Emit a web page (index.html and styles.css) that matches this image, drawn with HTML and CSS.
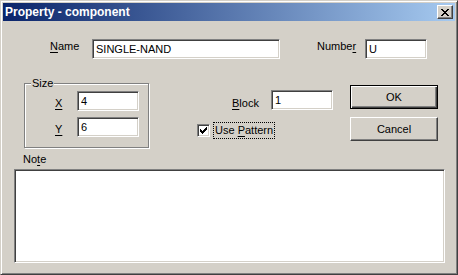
FILE: index.html
```html
<!DOCTYPE html>
<html lang="en">
<head>
    <meta charset="UTF-8">
    <title>Property - component</title>
    <link rel="stylesheet" href="styles.css">
</head>
<body>
    <div class="window">
        <div class="titlebar">
            <span class="title">Property - component</span>
            <button class="close-btn" type="button">
                <svg width="8" height="7" viewBox="0 0 8 7" shape-rendering="crispEdges">
                    <path d="M0 0h2v1h-2z M6 0h2v1h-2z M1 1h2v1h-2z M5 1h2v1h-2z M2 2h4v1h-4z M3 3h2v1h-2z M2 4h4v1h-4z M1 5h2v1h-2z M5 5h2v1h-2z M0 6h2v1h-2z M6 6h2v1h-2z" fill="#000"/>
                </svg>
            </button>
        </div>

        <div class="content">
            <div class="row-top">
                <label class="lbl lbl-name"><u>N</u>ame</label>
                <input class="field field-name" type="text" value="SINGLE-NAND">
                <label class="lbl lbl-number">Numbe<u>r</u></label>
                <input class="field field-short" type="text" value="U">
            </div>

            <div class="row-mid">
                <fieldset class="group">
                    <legend>Size</legend>
                    <div class="group-row">
                        <label class="lbl lbl-axis"><u>X</u></label>
                        <input class="field field-short" type="text" value="4">
                    </div>
                    <div class="group-row group-row-next">
                        <label class="lbl lbl-axis"><u>Y</u></label>
                        <input class="field field-short" type="text" value="6">
                    </div>
                </fieldset>

                <div class="middle">
                    <div class="block-row">
                        <label class="lbl lbl-block"><u>B</u>lock</label>
                        <input class="field field-short" type="text" value="1">
                    </div>
                    <div class="check-row">
                        <span class="checkbox">
                            <svg width="7" height="7" viewBox="0 0 7 7" shape-rendering="crispEdges">
                                <path d="M6 0h1v1h-1z M5 1h2v1h-2z M0 2h1v1h-1z M4 2h3v1h-3z M0 3h2v1h-2z M3 3h3v1h-3z M0 4h5v1h-5z M1 5h3v1h-3z M2 6h1v1h-1z" fill="#000"/>
                            </svg>
                        </span>
                        <span class="check-label">Use <u>P</u>attern</span>
                    </div>
                </div>

                <div class="buttons">
                    <button class="btn btn-default" type="button">OK</button>
                    <button class="btn" type="button">Cancel</button>
                </div>
            </div>

            <label class="lbl lbl-note">No<u>t</u>e</label>
            <textarea class="field note"></textarea>
        </div>
    </div>
</body>
</html>
```

FILE: styles.css
```css
body {
    margin: 0;
    font-family: "Liberation Sans", Arial, sans-serif;
    font-size: 11px;
    color: #000;
}

.window {
    width: 458px;
    height: 275px;
    box-sizing: border-box;
    background-color: #d4d0c8;
    border: 1px solid;
    border-color: #d4d0c8 #404040 #404040 #d4d0c8;
    box-shadow: inset 1px 1px #fff, inset -1px -1px #808080;
    padding: 2px;
}

.titlebar {
    height: 18px;
    display: flex;
    align-items: center;
    justify-content: space-between;
    padding: 0 2px;
    background: linear-gradient(to right, #0a246a, #a6caf0);
    color: #fff;
    font-size: 12px;
    font-weight: bold;
}

.close-btn {
    width: 16px;
    height: 14px;
    padding: 0;
    margin: 0;
    display: flex;
    align-items: center;
    justify-content: center;
    background-color: #d4d0c8;
    border: 1px solid;
    border-color: #fff #404040 #404040 #fff;
    box-shadow: inset -1px -1px #808080;
}

/* sunken edit box */
.field {
    box-sizing: border-box;
    height: 20px;
    margin: 0;
    padding: 0 3px;
    border: 1px solid;
    border-color: #808080 #fff #fff #808080;
    box-shadow: inset 1px 1px #404040, inset -1px -1px #d4d0c8;
    background-color: #fff;
    font: inherit;
    color: #000;
    outline: none;
}

.field-name { width: 188px; }
.field-short { width: 62px; }

.lbl {
    box-sizing: border-box;
    line-height: 13px;
    align-self: flex-start;
}

u { text-decoration: underline; text-underline-offset: 2px; }

.row-top {
    display: flex;
    margin-top: 18px;
}

.lbl-name { width: 89px; padding: 1px 0 0 47px; }
.lbl-number { width: 85px; padding: 1px 0 0 37px; }

.row-mid {
    display: flex;
    align-items: flex-start;
}

.group {
    box-sizing: border-box;
    width: 125px;
    margin: 18px 0 0 21px;
    padding: 1px 0 10px 0;
    border: 1px solid #808080;
    box-shadow: 1px 1px 0 #fff, inset 1px 1px 0 #fff;
}

.group legend {
    margin-left: 6px;
    padding: 0 1px;
    line-height: 13px;
    background-color: #d4d0c8;
}

.group-row { display: flex; }
.group-row-next { margin-top: 6px; }

.lbl-axis { width: 52px; padding: 6px 0 0 30px; }

.middle {
    display: flex;
    flex-direction: column;
    width: 184px;
}

.block-row {
    display: flex;
    margin-top: 31px;
}

.lbl-block { width: 122px; padding: 7px 0 0 83px; }

.check-row {
    display: flex;
    align-items: flex-start;
    margin-top: 12px;
    padding-left: 48px;
}

.checkbox {
    box-sizing: border-box;
    width: 13px;
    height: 13px;
    margin: 2px 3px 0 0;
    display: flex;
    align-items: center;
    justify-content: center;
    border: 1px solid;
    border-color: #808080 #fff #fff #808080;
    box-shadow: inset 1px 1px #404040, inset -1px -1px #d4d0c8;
    background-color: #fff;
}

.check-label {
    line-height: 13px;
    padding: 1px 1px;
    border: 1px dotted #000;
}

.buttons {
    display: flex;
    flex-direction: column;
    gap: 8px;
    margin: 26px 0 0 17px;
}

.btn {
    box-sizing: border-box;
    width: 88px;
    height: 24px;
    margin: 0;
    padding: 0;
    font: inherit;
    color: #000;
    background-color: #d4d0c8;
    border: 1px solid;
    border-color: #fff #404040 #404040 #fff;
    box-shadow: inset -1px -1px #808080;
}

.btn-default {
    border: 1px solid #000;
    box-shadow: inset 1px 1px #fff, inset -1px -1px #404040, inset -2px -2px #808080;
}

.lbl-note {
    display: block;
    margin-top: 5px;
    padding-left: 20px;
}

.note {
    display: block;
    width: 431px;
    height: 94px;
    margin: 3px 0 0 11px;
    resize: none;
}
```
